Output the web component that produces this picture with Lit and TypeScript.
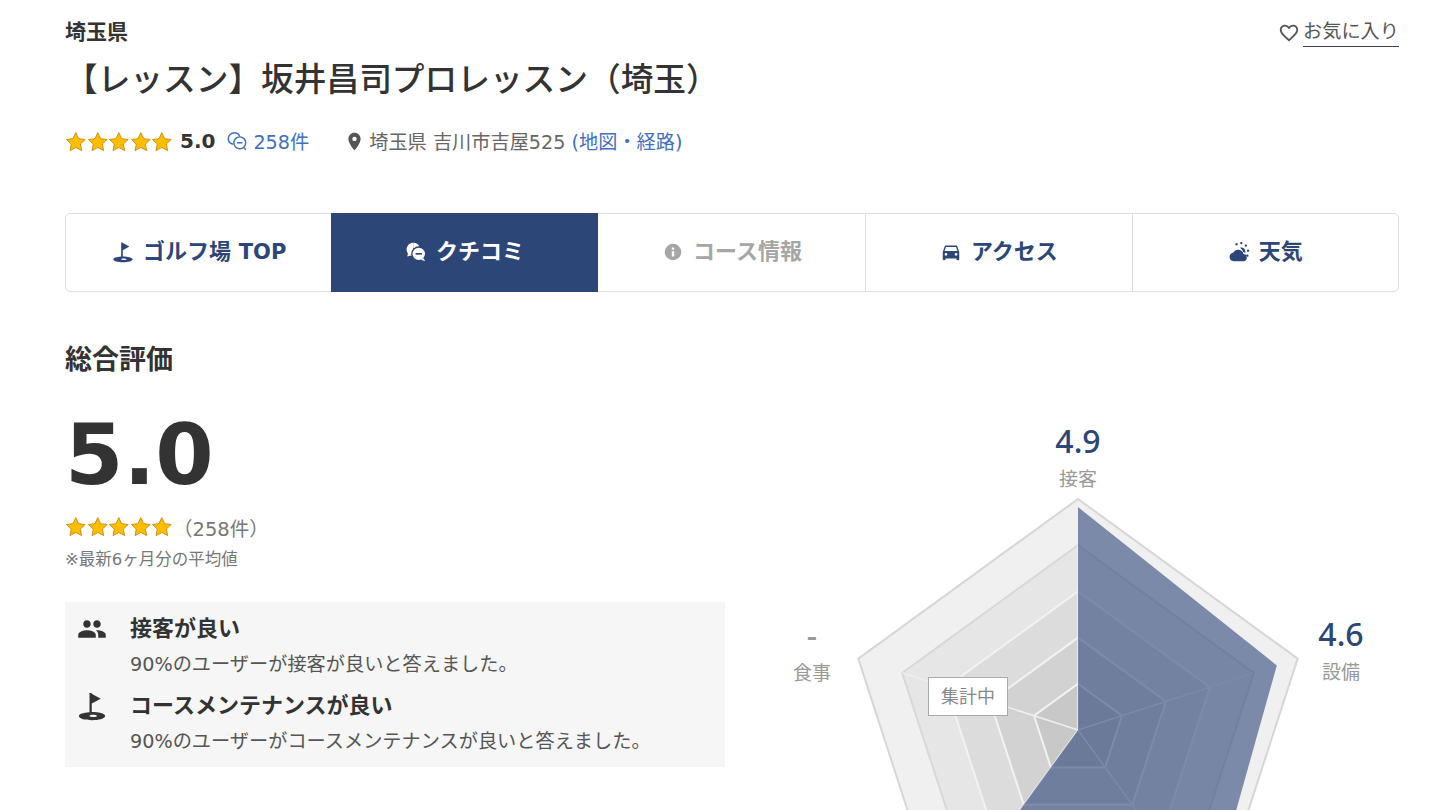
import { LitElement, html, css, svg } from "lit";
import { customElement } from "lit/decorators.js";

const ICONS = {
    people: "M16 11c1.66 0 2.99-1.34 2.99-3S17.66 5 16 5c-1.66 0-3 1.34-3 3s1.34 3 3 3zm-8 0c1.66 0 2.99-1.34 2.99-3S9.66 5 8 5C6.34 5 5 6.34 5 8s1.34 3 3 3zm0 2c-2.33 0-7 1.17-7 3.5V19h14v-2.5c0-2.33-4.67-3.5-7-3.5zm8 0c-.29 0-.62.02-.97.05 1.16.84 1.97 1.97 1.97 3.45V19h6v-2.5c0-2.33-4.67-3.5-7-3.5z",
    place: "M12 2C8.13 2 5 5.13 5 9c0 5.25 7 13 7 13s7-7.75 7-13c0-3.87-3.13-7-7-7zm0 9.500a2.500 2.500 0 0 1 0-5 2.500 2.500 0 0 1 0 5z",
    car: "M18.92 6.01C18.72 5.42 18.16 5 17.5 5h-11c-.66 0-1.21.42-1.42 1.01L3 12v8c0 .55.45 1 1 1h1c.55 0 1-.45 1-1v-1h12v1c0 .55.45 1 1 1h1c.55 0 1-.45 1-1v-8l-2.08-5.99zM6.5 16c-.83 0-1.5-.67-1.5-1.5S5.67 13 6.5 13s1.5.67 1.5 1.5S7.33 16 6.5 16zm11 0c-.83 0-1.5-.67-1.5-1.5s.67-1.5 1.5-1.5 1.5.67 1.5 1.5-.67 1.5-1.5 1.5zM5 11l1.5-4.5h11L19 11H5z",
    heart: "M16.5 3c-1.74 0-3.41.81-4.5 2.09C10.91 3.81 9.24 3 7.5 3 4.42 3 2 5.42 2 8.5c0 3.78 3.4 6.86 8.55 11.54L12 21.35l1.45-1.32C18.6 15.36 22 12.28 22 8.5 22 5.42 19.58 3 16.5 3zm-4.4 15.55l-.1.1-.1-.1C7.14 14.24 4 11.39 4 8.5 4 6.5 5.5 5 7.5 5c1.54 0 3.04.99 3.57 2.36h1.87C13.46 5.99 14.96 5 16.5 5c2 0 3.5 1.5 3.5 3.5 0 2.89-3.14 5.74-7.9 10.05z",
    golf: "M10 1.500h1.800v.7l7.200 3.900-7.200 3.900V16.800c5.200.1 10.700 1 10.700 3.200 0 2.300-5.300 3.300-10.500 3.300S1.500 22.300 1.500 20c0-1.700 3.400-2.700 8.500-3.100zM12.500 19c-1.500 0-2.500.4-2.500.9s1.300.9 3 .9 3-.4 3-.9-1.700-.9-3.500-.9z",
    weather: "M6.500 22a4.700 4.700 0 0 1-1-9.300 6.200 6.200 0 0 1 11.400 1.500 3.900 3.900 0 0 1-.5 7.800zM13 7.400a4.300 4.300 0 0 1 6 4.100c0 .6-.1 1.100-.3 1.600-.7-.6-1.300-1-2.100-1.200-.8-1.900-2-3.500-3.600-4.500zM8 3.500a1.300 1.300 0 1 0 2.600 0 1.300 1.300 0 1 0-2.600 0zM13.200 2.300a1.300 1.300 0 1 0 2.600 0 1.300 1.300 0 1 0-2.600 0zM18.200 5a1.300 1.300 0 1 0 2.600 0 1.300 1.300 0 1 0-2.600 0zM20.600 10.500a1.300 1.300 0 1 0 2.600 0 1.300 1.300 0 1 0-2.600 0zM19.800 16a1.300 1.300 0 1 0 2.600 0 1.300 1.300 0 1 0-2.600 0z",
};

const STAR = "M12 1.800l3.150 6.700 7.250.95-5.300 5.050 1.350 7.300L12 18.300l-6.400 3.500 1.350-7.300-5.300-5.050 7.250-.95z";

const CENTER = { x: 353, y: 350 };
const RADIUS = 231;

function point(axis: number, ratio: number) {
    const angle = (axis * 72 * Math.PI) / 180;
    return [CENTER.x + RADIUS * ratio * Math.sin(angle), CENTER.y - RADIUS * ratio * Math.cos(angle)];
}

function ring(ratio: number) {
    return [0, 1, 2, 3, 4].map((i) => point(i, ratio).join(",")).join(" ");
}

@customElement("star-row")
export class StarRow extends LitElement {
    static styles = css`
        :host {
            display: inline-flex;
        }
        svg {
            width: 21.6px;
            height: 21.6px;
            display: block;
        }
    `;

    render() {
        return [0, 1, 2, 3, 4].map(
            () => html`<svg viewBox="0 0 24 24"><path d=${STAR} fill="#fdbd00" stroke="#c98a08" stroke-width="1"></path></svg>`
        );
    }
}

@customElement("app-root")
export class AppRoot extends LitElement {
    static styles = css`
        :host {
            display: block;
            width: 1440px;
            height: 810px;
            overflow: hidden;
            background: #fff;
            color: #333;
            font-family: "DejaVu Sans", "Noto Sans CJK JP", sans-serif;
        }
        .page {
            padding: 15px 41px 0 65px;
        }
        .top {
            display: flex;
            justify-content: space-between;
            align-items: flex-start;
            height: 34px;
        }
        .pref {
            font-size: 21px;
            line-height: 34px;
            font-weight: 700;
        }
        .fav {
            display: flex;
            align-items: center;
            gap: 3px;
            margin-top: 3px;
            font-size: 19.2px;
            line-height: 28px;
            color: #555;
        }
        .fav svg {
            width: 22px;
            height: 22px;
            fill: #555;
        }
        .fav span {
            border-bottom: 1px solid #444;
        }
        h1 {
            margin: 5px 0 0;
            font-size: 32.7px;
            line-height: 52px;
            font-weight: 500;
        }
        .meta {
            display: flex;
            align-items: center;
            margin-top: 19px;
            height: 32px;
            padding-bottom: 2px;
            font-size: 19.2px;
            color: #666;
        }
        .meta star-row {
            margin-top: 2px;
        }
        .score {
            font-size: 20px;
            font-weight: 700;
            color: #333;
            margin-left: 7px;
        }
        .link {
            color: #3f6fc0;
        }
        .count {
            display: flex;
            align-items: center;
            gap: 5px;
            margin-left: 11px;
        }
        .count svg {
            width: 22px;
            height: 22px;
        }
        .addr {
            display: flex;
            align-items: center;
            gap: 4px;
            margin-left: 35px;
        }
        .addr svg {
            width: 21px;
            height: 21px;
            fill: #555;
        }
        .tabs {
            display: grid;
            grid-template-columns: repeat(5, 1fr);
            height: 79px;
            margin-top: 54px;
            box-sizing: border-box;
            border: 1px solid #ddd;
            border-radius: 5px;
        }
        .tab {
            display: flex;
            align-items: center;
            justify-content: center;
            gap: 9px;
            padding-bottom: 8px;
            font-size: 22px;
            font-weight: 700;
            color: #2c4678;
            border-left: 1px solid #ddd;
        }
        .tab:first-child {
            border-left: none;
        }
        .tab svg {
            width: 22px;
            height: 22px;
            margin-top: 6px;
            fill: currentColor;
        }
        .tab .latin {
            font-size: 21px;
        }
        .tab.active {
            background: #2c4678;
            color: #fff;
            margin: -1px 1px -1px -1px;
            border-left: none;
        }
        .tab.off {
            color: #a6a6a6;
            border-left: none;
        }
        h2 {
            margin: 48px 0 0;
            font-size: 27px;
            line-height: 40px;
            font-weight: 700;
        }
        .summary {
            display: flex;
        }
        .left {
            width: 660px;
            flex: none;
        }
        .big {
            font-size: 84px;
            line-height: 110px;
            font-weight: 700;
            margin-top: 20px;
        }
        .total {
            display: flex;
            align-items: center;
            margin-top: 2px;
            height: 30px;
            color: #777;
        }
        .total span {
            font-size: 19.5px;
        }
        .note {
            font-size: 16.5px;
            line-height: 26px;
            margin-top: 5px;
            color: #777;
        }
        .points {
            margin-top: 29px;
            padding: 8px 0 10px 12px;
            height: 165px;
            box-sizing: border-box;
            background: #f6f6f6;
        }
        .point {
            display: grid;
            grid-template-columns: 53px 1fr;
            align-items: center;
            margin-bottom: 5px;
        }
        .point svg {
            width: 30px;
            height: 30px;
            fill: #333;
        }
        .point b {
            font-size: 22px;
            line-height: 38px;
        }
        .point p {
            grid-column: 2;
            margin: 0;
            font-size: 19.2px;
            line-height: 34px;
            color: #555;
        }
        .chart {
            flex: 1;
            position: relative;
            height: 560px;
        }
        .chart svg {
            position: absolute;
            left: 0;
            top: 0;
        }
        .axis {
            position: absolute;
            width: 100px;
            margin-left: -50px;
            text-align: center;
        }
        .axis strong {
            display: block;
            font-family: "Noto Sans", sans-serif;
            font-size: 32px;
            line-height: 40px;
            font-weight: 500;
            color: #2c4678;
        }
        .axis strong.none {
            color: #999;
        }
        .axis span {
            display: block;
            margin-top: 3px;
            font-size: 19px;
            line-height: 30px;
            color: #999;
        }
        .pending {
            position: absolute;
            left: 203px;
            top: 297px;
            width: 80px;
            height: 39px;
            box-sizing: border-box;
            background: #fff;
            border: 1px solid #aaa;
            font-size: 18px;
            line-height: 37px;
            text-align: center;
            color: #888;
        }
    `;

    private icon(name: keyof typeof ICONS) {
        return html`<svg viewBox="0 0 24 24"><path d=${ICONS[name]} fill-rule="evenodd"></path></svg>`;
    }

    private radar() {
        const levels = [
            { r: 1, fill: "#f0f0f0", line: "#d6d6d6" },
            { r: 0.8, fill: "#e6e6e6", line: "#d8d8d8" },
            { r: 0.6, fill: "#dcdcdc", line: "#f2f2f2" },
            { r: 0.4, fill: "#d2d2d2", line: "#f2f2f2" },
            { r: 0.2, fill: "#c8c8c8", line: "#f2f2f2" },
        ];
        const data = [point(0, 0.965), point(1, 0.905), point(2, 0.96), point(3, 0.96), [CENTER.x, CENTER.y]]
            .map((p) => p.join(","))
            .join(" ");
        return svg`
            ${levels.map((l) => svg`<polygon points=${ring(l.r)} fill=${l.fill} stroke=${l.line} stroke-width="2"></polygon>`)}
            ${[0, 1, 2, 3, 4].map((i) => {
                const [x, y] = point(i, 0.8);
                return svg`<line x1=${CENTER.x} y1=${CENTER.y} x2=${x} y2=${y} stroke="#efefef" stroke-width="1.500"></line>`;
            })}
            <polygon points=${data} fill="#2c4678" fill-opacity="0.6"></polygon>
        `;
    }

    render() {
        const axes = [
            { label: "接客", value: "4.9", x: 353, top: 41 },
            { label: "設備", value: "4.6", x: 616, top: 234 },
            { label: "食事", value: "-", x: 87, top: 235 },
        ];
        return html`
            <div class="page">
                <div class="top">
                    <div class="pref">埼玉県</div>
                    <div class="fav">${this.icon("heart")}<span>お気に入り</span></div>
                </div>
                <h1>【レッスン】坂井昌司プロレッスン（埼玉）</h1>
                <div class="meta">
                    <star-row></star-row>
                    <span class="score">5.0</span>
                    <span class="count link">
                        <svg viewBox="0 0 24 24" fill="none" stroke="currentColor" stroke-width="1.600">
                            <path d="M7.500 15.500C4.200 14.500 2.500 12 2.500 9.500 2.500 6 5.500 3 9 3c2.800 0 5 1.500 6 4"></path>
                            <circle cx="15" cy="14" r="6.500"></circle>
                            <path d="M12 14h6M19.500 19l2 2.500"></path>
                        </svg>
                        258件
                    </span>
                    <span class="addr">
                        ${this.icon("place")}
                        <span>埼玉県 吉川市吉屋525 <span class="link">(地図・経路)</span></span>
                    </span>
                </div>
                <nav class="tabs">
                    <div class="tab">${this.icon("golf")}<span>ゴルフ場 <span class="latin">TOP</span></span></div>
                    <div class="tab active">
                        <svg viewBox="0 0 24 24">
                            <path d="M9 2a7.200 7.200 0 0 0-5.800 11.500L2.500 17l4-1.300A7 7 0 0 0 9 16.200z"></path>
                            <path d="M9 2a7.200 7.200 0 0 1 7 5.500H9z"></path>
                            <circle cx="15" cy="14" r="7.500" stroke="#2c4678" stroke-width="1.500"></circle>
                            <path d="M20 18.500l2 3.500-4.500-1.500z"></path>
                            <path d="M11.500 14h7" stroke="#2c4678" stroke-width="1.800"></path>
                        </svg>
                        クチコミ
                    </div>
                    <div class="tab off">
                        <svg viewBox="0 0 24 24">
                            <path d="M12 3a9 9 0 1 0 0 18 9 9 0 0 0 0-18zm-1.300 4h2.600v2.600h-2.600zm0 4.200h2.600V17h-2.600z" fill-rule="evenodd"></path>
                        </svg>
                        コース情報
                    </div>
                    <div class="tab">${this.icon("car")}アクセス</div>
                    <div class="tab">${this.icon("weather")}天気</div>
                </nav>
                <h2>総合評価</h2>
                <div class="summary">
                    <div class="left">
                        <div class="big">5.0</div>
                        <div class="total"><star-row></star-row><span>（258件）</span></div>
                        <div class="note">※最新6ヶ月分の平均値</div>
                        <div class="points">
                            <div class="point">
                                ${this.icon("people")}<b>接客が良い</b>
                                <p>90%のユーザーが接客が良いと答えました。</p>
                            </div>
                            <div class="point">
                                ${this.icon("golf")}<b>コースメンテナンスが良い</b>
                                <p>90%のユーザーがコースメンテナンスが良いと答えました。</p>
                            </div>
                        </div>
                    </div>
                    <div class="chart">
                        <svg width="674" height="620" viewBox="0 0 674 620">${this.radar()}</svg>
                        ${axes.map(
                            (a) => html`
                                <div class="axis" style="left:${a.x}px;top:${a.top}px">
                                    <strong class=${a.value === "-" ? "none" : ""}>${a.value}</strong>
                                    <span>${a.label}</span>
                                </div>
                            `
                        )}
                        <div class="pending">集計中</div>
                    </div>
                </div>
            </div>
        `;
    }
}
